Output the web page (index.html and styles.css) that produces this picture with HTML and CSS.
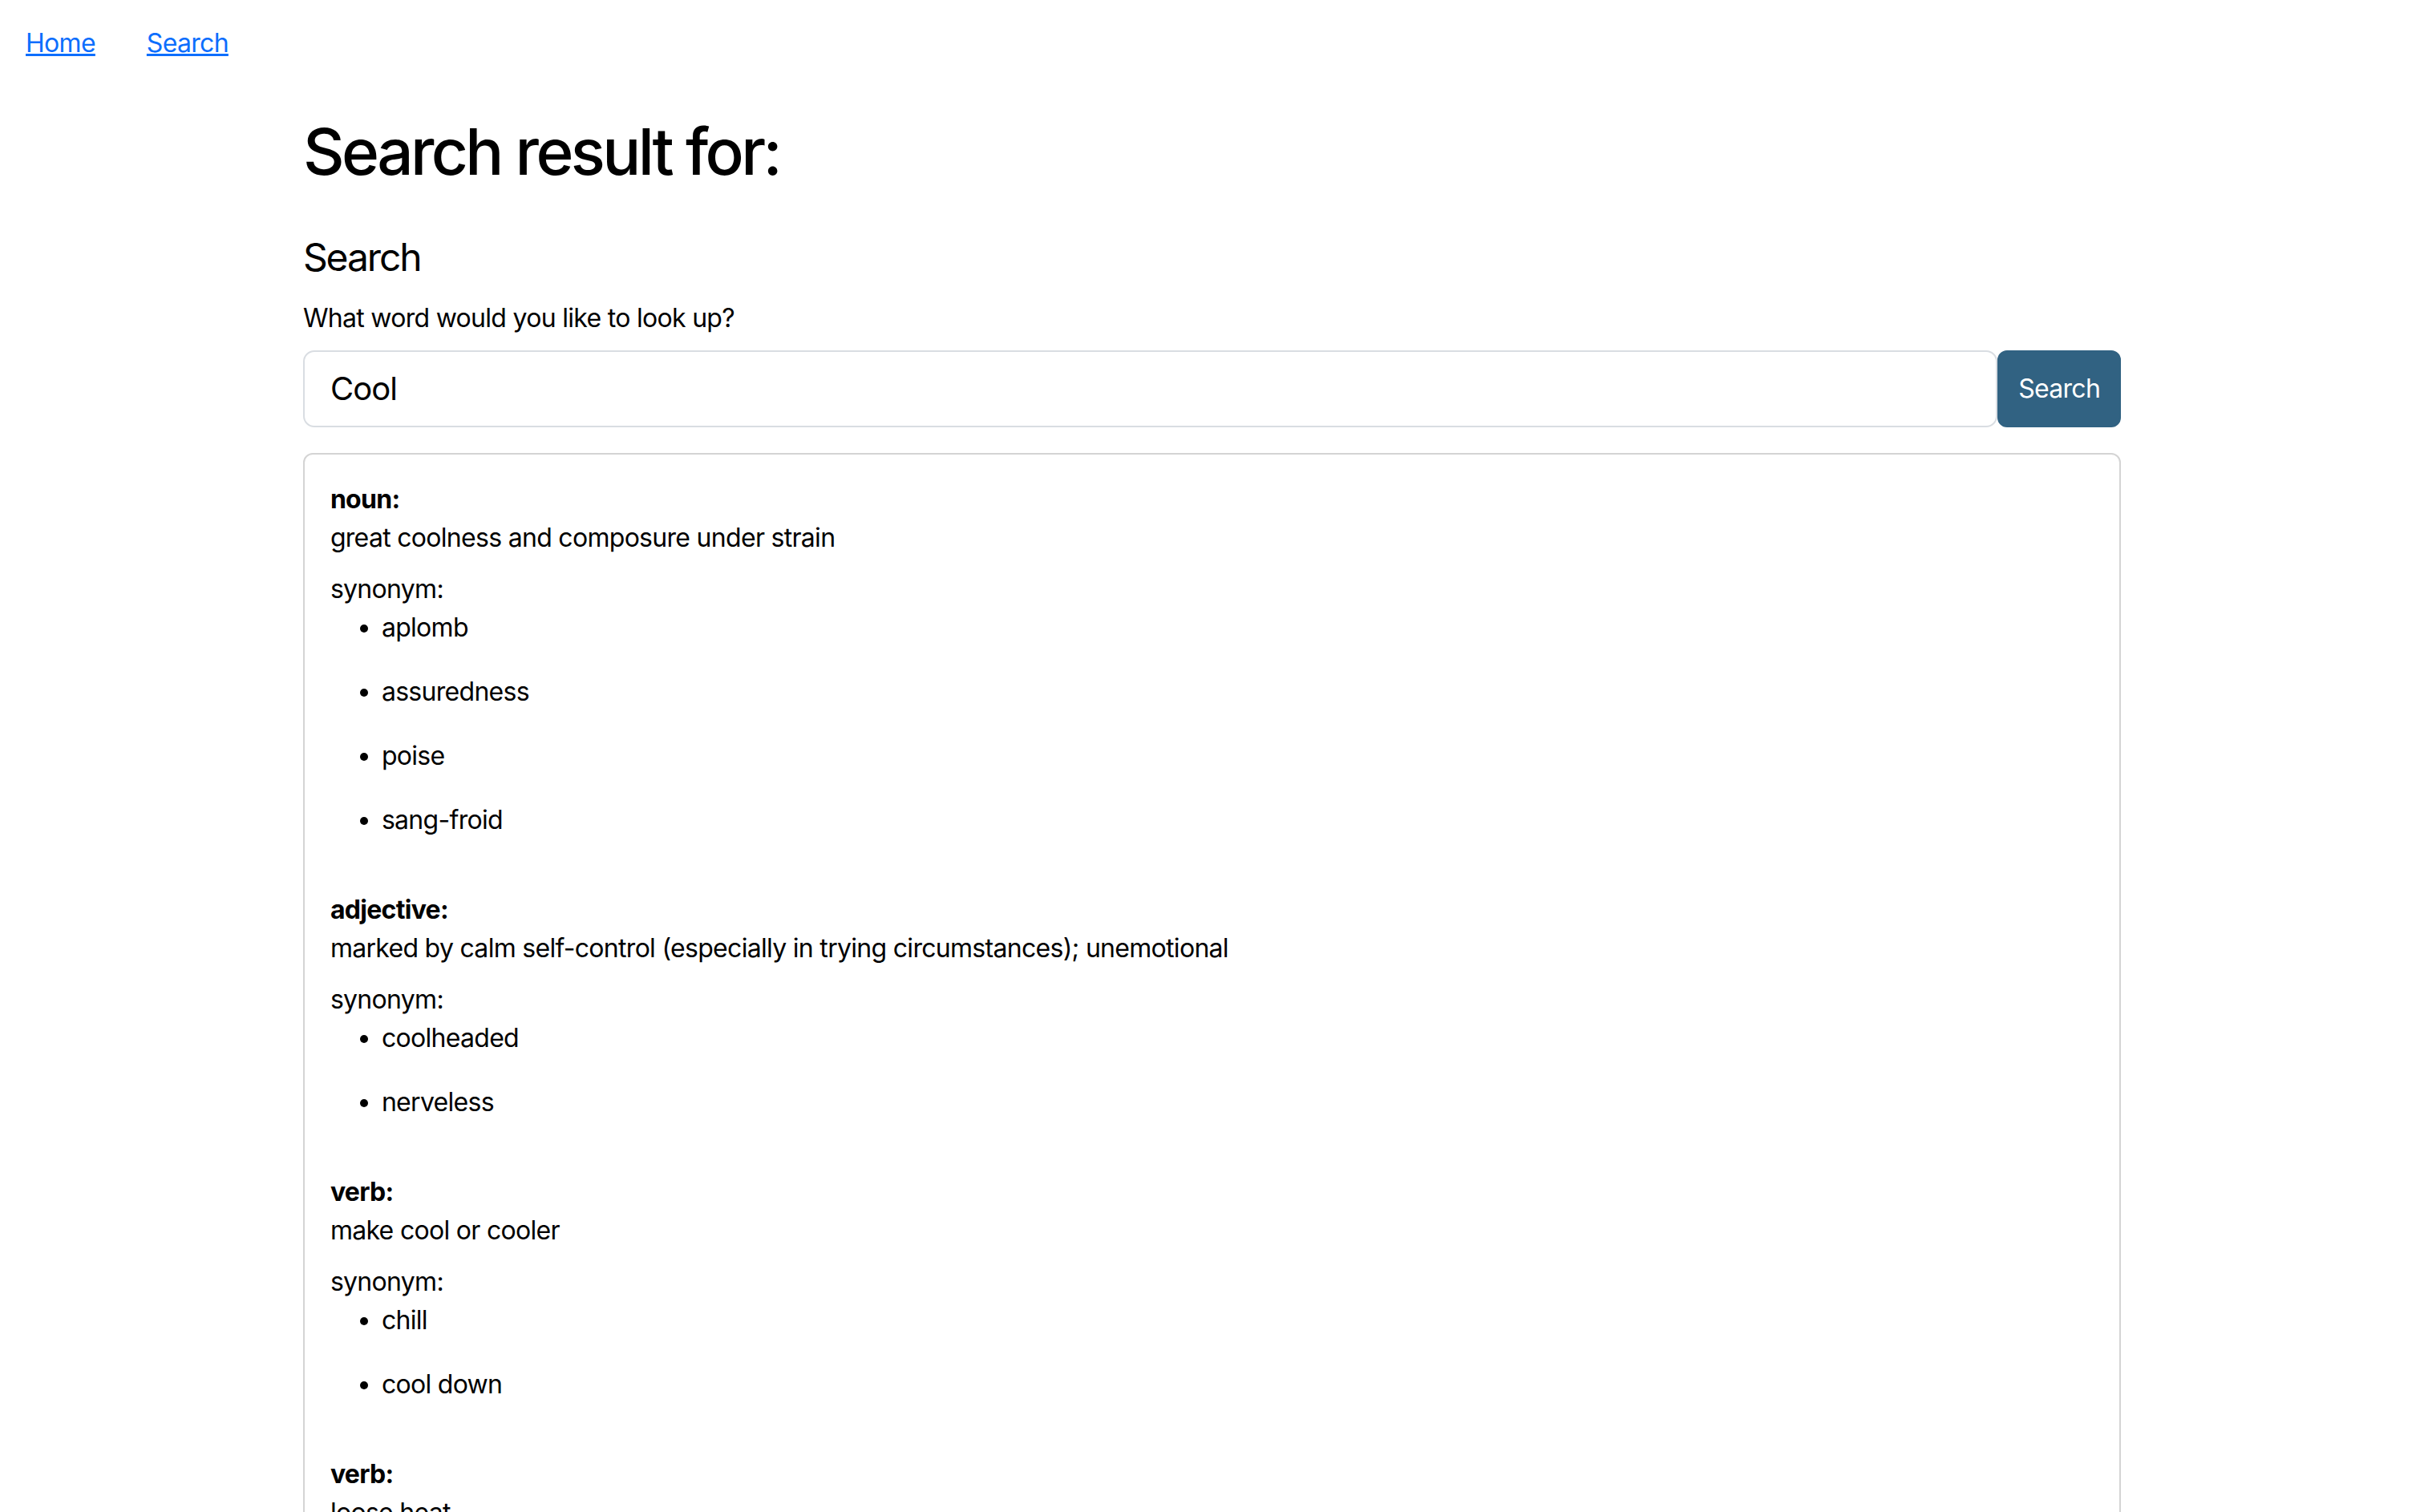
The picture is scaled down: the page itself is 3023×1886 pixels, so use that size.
FILE: index.html
```html
<!DOCTYPE html>
<html lang="en">
<head>
<meta charset="utf-8">
<title>Search result</title>
<link rel="stylesheet" href="styles.css">
</head>
<body>
<nav class="topnav">
  <a class="topnav-link" href="#">Home</a>
  <a class="topnav-link" href="#">Search</a>
</nav>
<main class="page">
  <h1 class="page-title">Search result for:</h1>
  <section class="search">
    <h2 class="search-heading">Search</h2>
    <form class="search-form">
      <label class="search-label" for="word">What word would you like to look up?</label>
      <div class="search-row">
        <input class="search-input" id="word" type="text" value="Cool">
        <button class="search-btn" type="button">Search</button>
      </div>
    </form>
  </section>
  <div class="result-card">
    <div class="sense">
      <p class="sense-pos">noun:</p>
      <p class="sense-def">great coolness and composure under strain</p>
      <p class="sense-syn">synonym:</p>
      <ul class="syn-list">
        <li><p>aplomb</p></li>
        <li><p>assuredness</p></li>
        <li><p>poise</p></li>
        <li><p>sang-froid</p></li>
      </ul>
    </div>
    <div class="sense">
      <p class="sense-pos">adjective:</p>
      <p class="sense-def">marked by calm self-control (especially in trying circumstances); unemotional</p>
      <p class="sense-syn">synonym:</p>
      <ul class="syn-list">
        <li><p>coolheaded</p></li>
        <li><p>nerveless</p></li>
      </ul>
    </div>
    <div class="sense">
      <p class="sense-pos">verb:</p>
      <p class="sense-def">make cool or cooler</p>
      <p class="sense-syn">synonym:</p>
      <ul class="syn-list">
        <li><p>chill</p></li>
        <li><p>cool down</p></li>
      </ul>
    </div>
    <div class="sense">
      <p class="sense-pos">verb:</p>
      <p class="sense-def">loose heat</p>
      <p class="sense-syn">synonym:</p>
      <ul class="syn-list">
        <li><p>chill</p></li>
        <li><p>cool down</p></li>
      </ul>
    </div>
  </div>
</main>
</body>
</html>
```

FILE: styles.css
```css
* { box-sizing: border-box; }

html, body {
  margin: 0;
  padding: 0;
  background: #ffffff;
}

body {
  font-family: Inter, "Liberation Sans", sans-serif;
  font-size: 32px;
  line-height: 1.5;
  color: #000;
  letter-spacing: -0.7px;
}

.topnav {
  display: flex;
  padding: 14px 0 10px;
}

.topnav-link {
  display: block;
  padding: 16px 32px;
  color: #0d6efd;
  text-decoration: underline;
}

.page {
  width: 75%;
  margin: 0 auto;
  padding-top: 37px;
}

.page-title {
  margin: 0 0 55px;
  font-size: 80px;
  line-height: 1.2;
  font-weight: 500;
  letter-spacing: -3.6px;
}

.search-heading {
  margin: 0 0 23px;
  font-size: 48px;
  line-height: 1.2;
  font-weight: 400;
  letter-spacing: -2.1px;
}

.search-form {
  margin: 0 0 32px;
}

.search-label {
  display: block;
  margin-bottom: 16px;
}

.search-row {
  display: flex;
}

.search-input {
  flex: 1;
  min-width: 0;
  height: 96px;
  padding: 0 32px;
  border: 2px solid #d9dde2;
  border-radius: 14px;
  font-family: inherit;
  font-size: 40px;
  letter-spacing: -0.9px;
  color: #000;
  background: #fff;
  outline: none;
}

.search-btn {
  height: 96px;
  padding: 0 24px;
  border: 2px solid #316282;
  border-radius: 12px;
  background: #316282;
  color: #fff;
  font-family: inherit;
  font-size: 32px;
  letter-spacing: -0.7px;
}

.result-card {
  border: 2px solid #d4d4d4;
  border-radius: 12px;
  padding: 32px;
}

.sense p {
  margin: 0;
}

.sense .sense-def {
  margin-bottom: 16px;
}

.syn-list {
  display: flow-root;
  margin: 0 0 32px;
  padding-left: 64px;
}

.syn-list li p {
  margin: 0 0 32px;
}

.sense-pos {
  font-weight: 700;
}
```
